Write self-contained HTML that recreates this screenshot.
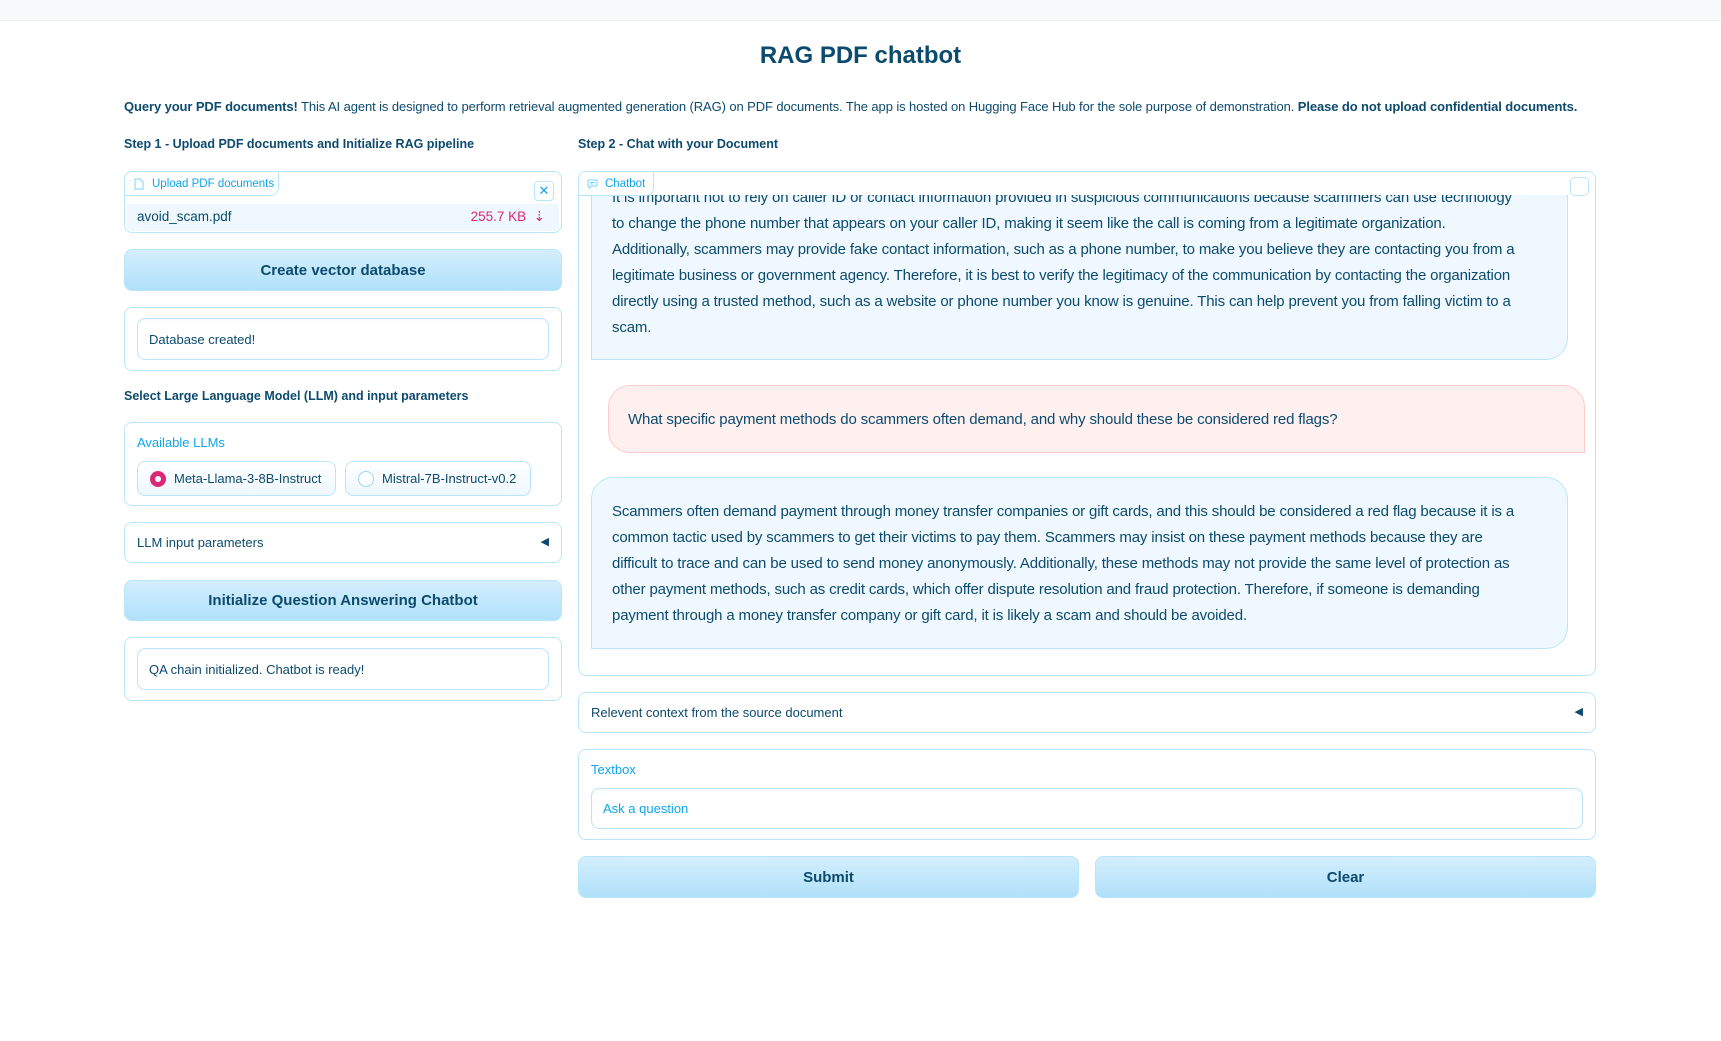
<!DOCTYPE html>
<html><head><meta charset="utf-8"><style>
*{box-sizing:border-box;margin:0;padding:0}
body{width:1721px;height:1041px;background:#fff;font-family:"Liberation Sans",sans-serif;color:#0c4a6e;position:relative;overflow:hidden}
.a{position:absolute}
.box{position:absolute;border:1px solid #bae6fd;border-radius:8px;background:#fff}
.btn{position:absolute;border:1px solid #bae6fd;border-radius:8px;background:linear-gradient(180deg,#d4eefd,#b0e1fa);font-weight:bold;font-size:15px;display:flex;align-items:center;justify-content:center;color:#0c4a6e}
.inp{position:absolute;border:1px solid #bae6fd;border-radius:8px;background:#fff;font-size:13px;display:flex;align-items:center;padding-left:11px;box-shadow:inset 0 1px 2px rgba(0,0,0,.04)}
.h{font-weight:bold;font-size:12.5px}
.chat{font-size:15px;line-height:26px;white-space:nowrap;letter-spacing:-0.15px}
</style></head><body>
<div class="a" style="left:0;top:0;width:1721px;height:21px;background:#f8f9fb;border-bottom:1px solid #eef0f3"></div>
<div class="a" style="left:0;top:42px;width:1721px;text-align:center;font-size:24px;font-weight:bold">RAG PDF chatbot</div>
<div class="a" style="left:124px;top:99px;font-size:13px;white-space:nowrap;letter-spacing:-0.1px"><b>Query your PDF documents!</b> This AI agent is designed to perform retrieval augmented generation (RAG) on PDF documents. The app is hosted on Hugging Face Hub for the sole purpose of demonstration. <b>Please do not upload confidential documents.</b></div>
<div class="a h" style="left:124px;top:137px">Step 1 - Upload PDF documents and Initialize RAG pipeline</div>
<div class="a h" style="left:578px;top:137px">Step 2 - Chat with your Document</div>

<div class="box" style="left:124px;top:171px;width:438px;height:62px">
 <div class="a" style="left:-1px;top:-1px;width:155px;height:25px;border:1px solid #bae6fd;border-radius:8px 0 8px 0;font-size:11.5px;color:#0ea5e9;padding:6px 0 0 27px">Upload PDF documents
  <svg class="a" style="left:9px;top:6px" width="10" height="12" viewBox="0 0 10 12"><path d="M1 1h5l3 3v7H1z" fill="none" stroke="#7dd3fc" stroke-width="1"/></svg></div>
 <div class="a" style="left:409px;top:9px;width:20px;height:20px;border:1px solid #bae6fd;border-radius:4px;color:#0ea5e9;font-size:13px;text-align:center;line-height:18px">✕</div>
 <div class="a" style="left:2px;top:32px;width:432px;height:27px;background:#eef8fe;font-size:13.5px;padding:5px 0 0 10px">avoid_scam.pdf
  <span class="a" style="right:14px;top:5px;color:#db2777">255.7 KB&nbsp; ⇣</span></div>
</div>
<div class="btn" style="left:124px;top:249px;width:438px;height:42px">Create vector database</div>
<div class="box" style="left:124px;top:307px;width:438px;height:64px"><div class="inp" style="left:12px;top:10px;width:412px;height:42px">Database created!</div></div>
<div class="a h" style="left:124px;top:389px">Select Large Language Model (LLM) and input parameters</div>
<div class="box" style="left:124px;top:422px;width:438px;height:84px">
 <div class="a" style="left:12px;top:12px;font-size:13px;color:#0ea5e9">Available LLMs</div>
 <div class="a" style="left:12px;top:38px;width:199px;height:35px;border:1px solid #bae6fd;border-radius:8px;background:linear-gradient(#fff,#eef8fe);font-size:13px;padding:9px 0 0 36px">Meta-Llama-3-8B-Instruct
  <div class="a" style="left:12px;top:9px;width:16px;height:16px;border-radius:50%;background:#db2777"><div class="a" style="left:5px;top:5px;width:6px;height:6px;border-radius:50%;background:#fff"></div></div></div>
 <div class="a" style="left:220px;top:38px;width:186px;height:35px;border:1px solid #bae6fd;border-radius:8px;background:linear-gradient(#fff,#eef8fe);font-size:13px;padding:9px 0 0 36px">Mistral-7B-Instruct-v0.2
  <div class="a" style="left:12px;top:9px;width:16px;height:16px;border-radius:50%;border:1px solid #93d5f9;background:#fff"></div></div>
</div>
<div class="box" style="left:124px;top:522px;width:438px;height:41px;font-size:13px;padding:12px 0 0 12px">LLM input parameters<span class="a" style="right:12px;top:12px;font-size:11px">◀</span></div>
<div class="btn" style="left:124px;top:580px;width:438px;height:41px">Initialize Question Answering Chatbot</div>
<div class="box" style="left:124px;top:637px;width:438px;height:64px"><div class="inp" style="left:12px;top:10px;width:412px;height:42px">QA chain initialized. Chatbot is ready!</div></div>

<div class="box" style="left:578px;top:171px;width:1018px;height:505px;overflow:hidden">
 <div class="a" style="left:12px;top:-200px;width:977px;height:388px;background:#eef8fe;border:1px solid #bae6fd;border-radius:22px 22px 22px 0"></div>
 <div class="a chat" style="left:33px;top:13px">It is important not to rely on caller ID or contact information provided in suspicious communications because scammers can use technology<br>to change the phone number that appears on your caller ID, making it seem like the call is coming from a legitimate organization.<br>Additionally, scammers may provide fake contact information, such as a phone number, to make you believe they are contacting you from a<br>legitimate business or government agency. Therefore, it is best to verify the legitimacy of the communication by contacting the organization<br>directly using a trusted method, such as a website or phone number you know is genuine. This can help prevent you from falling victim to a<br>scam.</div>
 <div class="a" style="left:0;top:0;width:1016px;height:23px;background:#fff"></div>
 <div class="a" style="left:-1px;top:-1px;width:76px;height:25px;background:#fff;border:1px solid #bae6fd;border-radius:8px 0 8px 0;font-size:11.5px;color:#0ea5e9;padding:6px 0 0 26px">Chatbot
  <svg class="a" style="left:8px;top:7px" width="11" height="10" viewBox="0 0 11 10"><path d="M1 1h9v6H5L2 9V7H1z" fill="none" stroke="#7dd3fc"/><path d="M3 3.5h5M3 5h3" stroke="#7dd3fc"/></svg></div>
 <div class="a" style="left:991px;top:5px;width:19px;height:19px;border:1px solid #bae6fd;border-radius:5px;background:#fff"></div>
 <div class="a" style="left:29px;top:213px;width:977px;height:68px;background:#fff0f0;border:1px solid #fecaca;border-radius:22px 22px 0 22px"></div>
 <div class="a chat" style="left:49px;top:198px;line-height:100px">What specific payment methods do scammers often demand, and why should these be considered red flags?</div>
 <div class="a" style="left:12px;top:305px;width:977px;height:172px;background:#eef8fe;border:1px solid #bae6fd;border-radius:22px 22px 22px 0"></div>
 <div class="a chat" style="left:33px;top:327px">Scammers often demand payment through money transfer companies or gift cards, and this should be considered a red flag because it is a<br>common tactic used by scammers to get their victims to pay them. Scammers may insist on these payment methods because they are<br>difficult to trace and can be used to send money anonymously. Additionally, these methods may not provide the same level of protection as<br>other payment methods, such as credit cards, which offer dispute resolution and fraud protection. Therefore, if someone is demanding<br>payment through a money transfer company or gift card, it is likely a scam and should be avoided.</div>
</div>
<div class="box" style="left:578px;top:692px;width:1018px;height:41px;font-size:13px;padding:12px 0 0 12px">Relevent context from the source document<span class="a" style="right:12px;top:12px;font-size:11px">◀</span></div>
<div class="box" style="left:578px;top:749px;width:1018px;height:91px">
 <div class="a" style="left:12px;top:12px;font-size:13px;color:#0ea5e9">Textbox</div>
 <div class="inp" style="left:12px;top:38px;width:992px;height:41px;color:#0ea5e9">Ask a question</div>
</div>
<div class="btn" style="left:578px;top:856px;width:501px;height:42px">Submit</div>
<div class="btn" style="left:1095px;top:856px;width:501px;height:42px">Clear</div>
</body></html>
